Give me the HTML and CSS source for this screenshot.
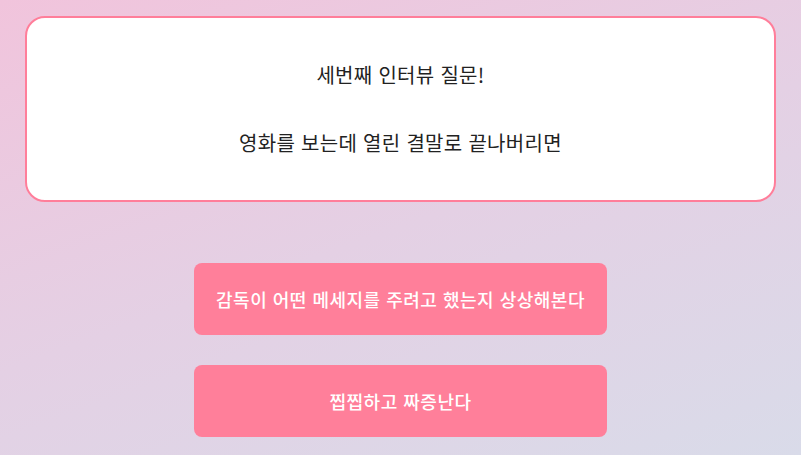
FILE: index.html
```html
<!DOCTYPE html>
<html lang="ko">
<head>
  <meta charset="UTF-8">
  <meta name="viewport" content="width=device-width, initial-scale=1.0">
  <title>인터뷰 질문</title>
  <link rel="stylesheet" href="styles.css">
</head>
<body>

  <div class="question">
    <p>세번째 인터뷰 질문!</p>
    <p>영화를 보는데 열린 결말로 끝나버리면</p>
  </div>

  <div class="answers">
    <button class="answer">감독이 어떤 메세지를 주려고 했는지 상상해본다</button>
    <button class="answer">찝찝하고 짜증난다</button>
  </div>

</body>
</html>
```

FILE: styles.css
```css
html {
  min-height: 100%;
  background: linear-gradient(160deg, #f1c4dc 0%, #e4d0e4 50%, #d9dbe9 100%);
}
body {
  margin: 0;
  padding: 16px 25px;
  font-family: "Noto Sans CJK KR", "Noto Sans", sans-serif;
  color: #222;
}
.question {
  background-color: #fff;
  border: 2px solid #ff7e9a;
  border-radius: 20px;
  padding: 44px 20px;
  text-align: center;
}
.question p {
  margin: 0;
  font-size: 20px;
  line-height: 26px;
  letter-spacing: 0.3px;
}
.question p + p {
  margin-top: 42px;
}
.answers {
  display: flex;
  flex-direction: column;
  align-items: center;
  gap: 30px;
  margin-top: 61px;
}
.answer {
  width: 413px;
  height: 72px;
  font-family: inherit;
  font-size: 18px;
  font-weight: 500;
  letter-spacing: 0.5px;
  color: #fff;
  background-color: #ff7f9a;
  border: none;
  border-radius: 8px;
  cursor: pointer;
}
.answer:hover {
  background-color: #f86a8a;
}
```
